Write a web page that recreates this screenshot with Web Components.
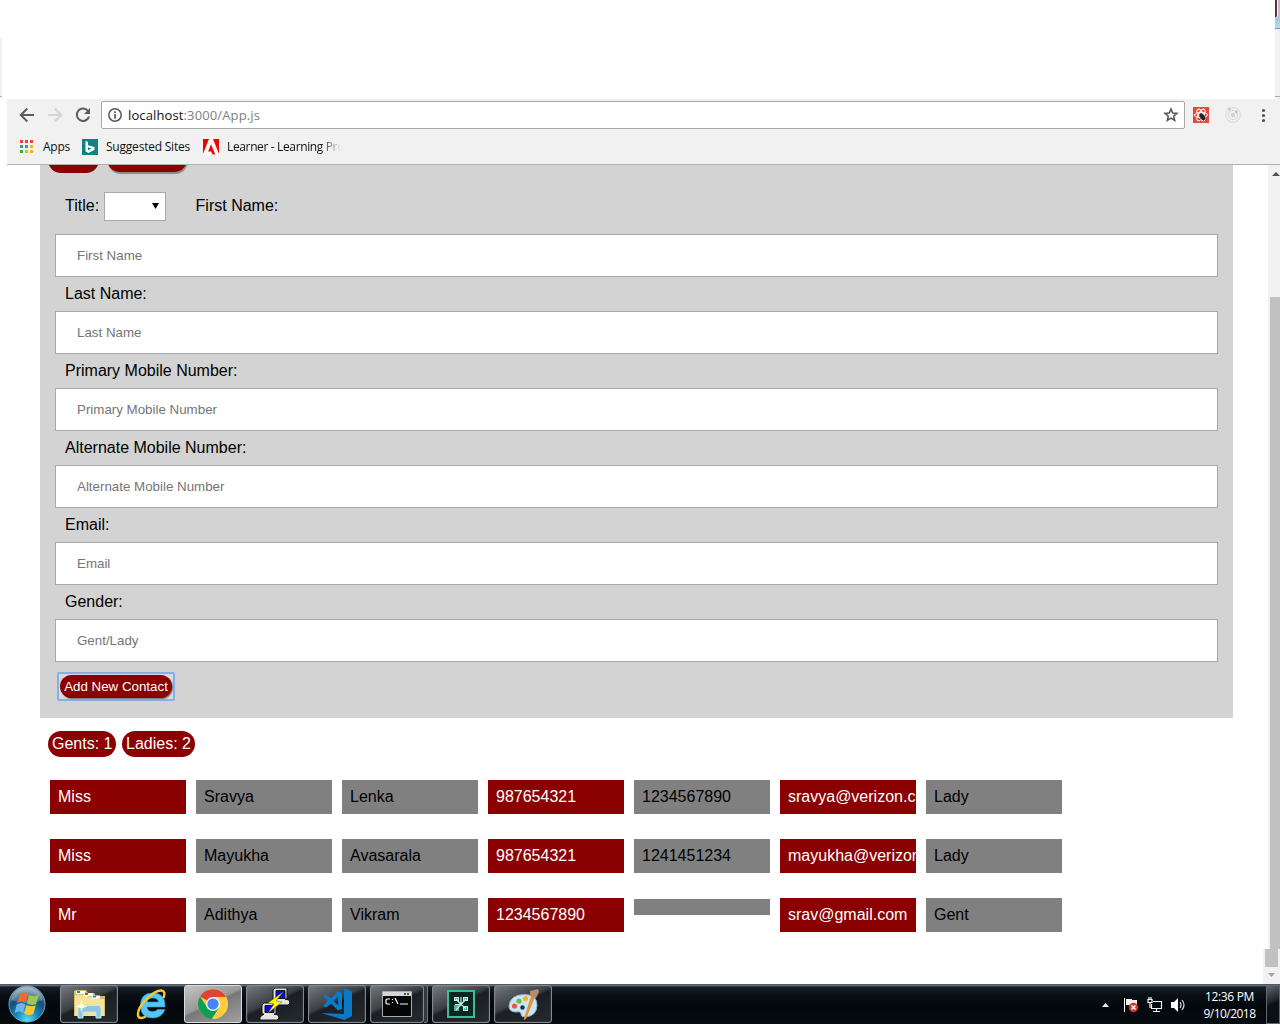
<!DOCTYPE html>
<html lang="en"><head><meta charset="utf-8"><title>Contacts</title>
<style>
html,body{margin:0;padding:0;height:100%;overflow:hidden;background:#fff;font-family:"Liberation Sans",Arial,sans-serif;font-size:16px;color:#000}
</style></head><body>
<desk-screen></desk-screen>
<script>
const define=(name,html,init)=>customElements.define(name,class extends HTMLElement{
  constructor(){super();this.attachShadow({mode:'open'}).innerHTML=html}
  connectedCallback(){if(init)init(this,this.shadowRoot)}
});

// Text whose tracking is adjusted to a given width
define('fit-text','<style>:host{display:block;white-space:nowrap;line-height:16px}span{display:inline-block}</style><span><slot></slot></span>',(el,root)=>{
  const s=root.querySelector('span'),n=el.textContent.length,w=+el.getAttribute('width');
  s.style.letterSpacing=((w-s.getBoundingClientRect().width)/n)+'px';
});

define('browser-toolbar',`<style>
:host{display:block;height:66px;margin-left:7px;background:#f1f1f1;border-bottom:1px solid #b0b0b0;box-sizing:border-box;font-family:"Open Sans","Noto Sans",sans-serif;color:#111}
svg{display:block;flex:none}
.nav{display:flex;align-items:center;height:32px;padding-left:12px}
.addr{display:flex;align-items:center;width:1084px;height:28px;box-sizing:border-box;border:1px solid #a8a8a8;border-radius:2px;background:#fff;margin-left:10px;padding:0 5px 0 6px;font-size:13px;flex:none}
.addr fit-text{margin-left:6px;flex:1}
.addr i{font-style:normal;color:#808080}
.marks{display:flex;align-items:center;height:32px;padding-left:13px;font-size:12px}
.fade{width:114px;overflow:hidden;-webkit-mask-image:linear-gradient(90deg,#000 82%,transparent);mask-image:linear-gradient(90deg,#000 82%,transparent)}
</style>
<div class="nav">
<svg width="16" height="16" viewBox="0 0 16 16" fill="none" stroke="#5a5d61" stroke-width="2"><path d="M15 8H2.500M8.300 1.500L1.800 8l6.500 6.500"/></svg>
<svg style="margin-left:12px" width="16" height="16" viewBox="0 0 16 16" fill="none" stroke="#d4d4d4" stroke-width="2"><path d="M1 8h12.500M7.700 1.500L14.200 8l-6.500 6.500"/></svg>
<svg style="margin-left:12px" width="16" height="16" viewBox="0 0 16 16"><path d="M13 4A6.200 6.200 0 1 0 14 9.500" fill="none" stroke="#5a5d61" stroke-width="2"/><path d="M15 1v6H9z" fill="#5a5d61"/></svg>
<div class="addr">
<svg width="14" height="14" viewBox="0 0 14 14"><circle cx="7" cy="7" r="6.200" fill="none" stroke="#55585c" stroke-width="1.500"/><path d="M6.200 6h1.700v4.700H6.200zM6.200 3.200h1.700v1.700H6.200z" fill="#55585c"/></svg>
<fit-text width="132">localhost<i>:3000/App.js</i></fit-text>
<svg width="16" height="16" viewBox="0 0 16 16"><path d="M8 2l1.700 4 4.300.4-3.300 2.900 1 4.200L8 11.200l-3.700 2.300 1-4.200L2 6.400 6.300 6z" fill="none" stroke="#505357" stroke-width="1.500"/></svg>
</div>
<svg style="margin-left:8px" width="16" height="16" viewBox="0 0 16 16"><path fill="#dd4b39" d="M0 0h16v16H0z"/><g fill="none" stroke="#fff" stroke-width="1"><ellipse cx="8" cy="8" rx="6.500" ry="2.600"/><ellipse cx="8" cy="8" rx="6.500" ry="2.600" transform="rotate(60 8 8)"/><ellipse cx="8" cy="8" rx="6.500" ry="2.600" transform="rotate(120 8 8)"/></g><ellipse cx="9.500" cy="10" rx="2.200" ry="3.500" fill="#222" transform="rotate(-30 9.500 10)"/><path d="M6 9l6.500 2.500M6.500 12.500l6-4M7.500 6.500l3 7" stroke="#222" stroke-width=".8"/></svg>
<svg style="margin-left:16px" width="16" height="16" viewBox="0 0 16 16" fill="none" stroke="#d8d8d8"><circle cx="8" cy="8" r="7.300"/><circle cx="8" cy="8" r="4.600"/><circle cx="8" cy="8" r="2.300" fill="#d2d2d2" stroke="none"/><g fill="#c6c6c6" stroke="none"><circle cx="4.300" cy="2" r="1.500"/><circle cx="11.300" cy="5" r="1.400"/></g></svg>
<svg style="margin-left:20px" width="5" height="16" viewBox="0 0 5 16" fill="#505357"><circle cx="2.500" cy="3.500" r="1.600"/><circle cx="2.500" cy="8.500" r="1.600"/><circle cx="2.500" cy="13.500" r="1.600"/></svg>
</div>
<div class="marks">
<svg style="margin-top:-2px" width="13" height="13" viewBox="0 0 13 13"><path fill="#ea4335" d="M0 0h3v3H0zM5 0h3v3H5zM10 0h3v3h-3z"/><path fill="#34a853" d="M0 5h3v3H0zM0 10h3v3H0z"/><path fill="#4285f4" d="M5 5h3v3H5z"/><path fill="#fbb605" d="M10 5h3v3h-3zM5 10h3v3H5zM10 10h3v3h-3z"/></svg>
<fit-text width="27" style="margin-left:10px;width:27px">Apps</fit-text>
<svg style="margin-left:12px" width="16" height="16" viewBox="0 0 16 16"><path fill="#0c8484" d="M0 0h16v16H0z"/><path fill="#fff" fill-rule="evenodd" d="M3.500 2l2.400.8v3.400l6.600 1.900v3L6.300 14l-2.800-1.700zM5.900 8.300v3l3.600-1.800z"/></svg>
<fit-text width="84" style="margin-left:8px;width:84px">Suggested Sites</fit-text>
<svg style="margin-left:13px" width="16" height="16" viewBox="0 0 16 16"><path fill="#fff" d="M0 0h16v16H0z"/><path fill="#f40000" d="M0 0h6L0 15zM10 0h6v15zM8 5.200l4.300 10.300H9.500l-1.300-3H5.100z"/></svg>
<div class="fade" style="margin-left:8px"><fit-text width="117">Learner - Learning Pro</fit-text></div>
</div>`);

define('form-field',`<style>
:host{display:block}label{display:block;height:34px;line-height:33px;padding-left:10px}
:host([bare]) label{display:none}
input{display:block;width:100%;height:43px;box-sizing:border-box;border:1px solid #a9a9a9;border-radius:0;padding:0 21px;font:13.333px "Liberation Sans",Arial,sans-serif;background:#fff;outline:none}
input::placeholder{color:#757575;opacity:1}
</style><label></label><input>`,(el,root)=>{
  const t=el.getAttribute('label');
  root.querySelector('label').textContent=t+':';
  root.querySelector('input').placeholder=el.getAttribute('hint')||t;
});

define('contact-form',`<style>
:host{display:block;height:553px;width:1193px;margin-left:40px;box-sizing:border-box;padding:0 15px;background:#d3d3d3;overflow:hidden}
.tabs{display:flex;gap:8px;height:27px;margin-left:-7px;overflow:hidden}
.tabs b{display:block;background:#8b0000;border-radius:13px;height:26px;margin-top:-18px;width:51px}
.tabs b+b{width:80px;margin-top:-19px;box-shadow:1px 2px 1px #888}
.title{display:flex;height:42px;padding-left:10px}
.title span{line-height:27px}
.select{display:flex;align-items:center;justify-content:flex-end;box-sizing:border-box;width:62px;height:29px;margin-left:5px;margin-right:29.500px;border:1px solid #a9a9a9;background:#fff;padding-right:6px}
.select svg{margin-top:-2px}
button{display:block;width:112px;height:23px;padding:0;border:0;border-radius:12px;background:#8b0000;color:#fff;font:13.333px/23px "Liberation Sans",Arial,sans-serif;white-space:nowrap;box-shadow:1px 1px 1px #777;margin:0}
.focus{width:118px;height:29px;box-sizing:border-box;border:2px solid #88aee8;border-radius:2px;margin:10px 0 0 2px;padding:1px;display:flex;background:#d9d9d9}
</style>
<div class="tabs"><b></b><b></b></div>
<div class="title"><span>Title:</span><div class="select"><svg width="7" height="6"><path d="M0 0h7L3.500 6z"/></svg></div><span>First Name:</span></div>
<form-field bare label="First Name"></form-field>
<form-field label="Last Name"></form-field>
<form-field label="Primary Mobile Number"></form-field>
<form-field label="Alternate Mobile Number"></form-field>
<form-field label="Email"></form-field>
<form-field label="Gender" hint="Gent/Lady"></form-field>
<div class="focus"><button>Add New Contact</button></div>`);

define('count-pill',`<style>:host{display:block;height:26px;line-height:26px;border-radius:13px;background:#8b0000;color:#fff;box-sizing:border-box;padding:0 4px;white-space:nowrap}</style><slot></slot>`);

define('contact-row',`<style>:host{display:flex;gap:10px;height:34px;margin-bottom:25px;padding-left:50px}
div{box-sizing:border-box;width:136px;height:34px;line-height:34px;padding-left:8px;background:#808080;overflow:hidden;white-space:nowrap;flex:none}
.r{background:#8b0000;color:#fff}div:empty{height:16px;margin-top:1px}</style>`,(el,root)=>{
  el.getAttribute('values').split('|').forEach((v,i)=>{
    const d=document.createElement('div');d.textContent=v;if([0,3,5].includes(i))d.className='r';root.append(d);
  });
});

define('page-scrollbar',`<style>:host{display:flex;flex-direction:column;align-items:flex-end;width:17px;height:819px}
.top{width:12px;height:784px;background:#f1f1f1;display:flex;flex-direction:column;align-items:flex-end;overflow:hidden}
.top svg{height:132px;flex:none}.thumb{width:10px;height:652px;background:#c1c1c1}
.end{width:17px;height:35px;background:#f1f1f1}svg{display:block}</style>
<div class="top"><svg width="8" height="132"><path fill="#505050" d="M0 11L4 7l4 4z"/></svg><div class="thumb"></div></div>
<div class="end"><svg width="17" height="35"><path fill="#c1c1c1" d="M2 0h13v18H2z"/><path fill="#a3a3a3" d="M5 24h7l-3.500 4z"/></svg></div>`);

define('task-button',`<style>:host{display:flex;align-items:center;justify-content:center;width:58px;height:38px;box-sizing:border-box;border:1px solid #82878b;border-radius:3px;background:linear-gradient(155deg,#74777a 0,#3d4145 42%,#1b1f23 49%,#252a2e 100%);box-shadow:inset 0 0 1px #aaa;flex:none}
:host([active]){background:linear-gradient(155deg,#c3c4c5,#999 45%,#777 50%,#a2a2a2);border-color:#ddd}
:host([plain]){background:none;border-color:transparent;box-shadow:none}</style><slot></slot>`);

define('task-bar',`<style>
:host{display:flex;align-items:flex-start;height:40px;box-sizing:border-box;background:linear-gradient(#27323b 0,#77838e 1px,#17202a 3px,#0a1016 10px,#03080d 22px,#060b10);padding-top:1px;color:#fff;font-family:"Open Sans","Noto Sans",sans-serif;font-size:12px}
svg{display:block;flex:none}.apps{display:flex;gap:4px;margin-left:12px}
.tray{display:flex;align-items:center;height:39px;margin-left:auto}
.clock{display:flex;flex-direction:column;gap:1px;width:53px;align-items:center;margin:1px 10px 0 18px}
.peek{width:14px;height:39px;box-sizing:border-box;border:1px solid #60666b;background:linear-gradient(155deg,#60666b,#20262b 40%,#0b1015 50%)}
.stack{width:4px;height:38px;box-sizing:border-box;border:1px solid #70757a;border-left:0;border-radius:0 3px 3px 0;margin-left:-4px;background:#33383c}
</style>
<svg style="margin-left:8px" width="38" height="38" viewBox="0 0 38 38"><defs><radialGradient id="o" cx=".5" cy=".95" r=".9"><stop offset="0" stop-color="#4de6ff"/><stop offset=".35" stop-color="#1787bd"/><stop offset=".7" stop-color="#174d79"/><stop offset="1" stop-color="#8fa9ba"/></radialGradient></defs><circle cx="19" cy="19" r="18" fill="url(#o)" stroke="#789fb7"/><path d="M3 15A16.500 16.500 0 0 1 35 15Q19 21 3 15" fill="#fff" opacity=".22"/><path d="M12 9q4-3 8 0l-2.300 9q-4-3-8.500 0z" fill="#ef6a2d"/><path d="M21 10q5 2.500 10-.5l-2.800 9.500q-5 2-9.500-.5z" fill="#9cc94a"/><path d="M8.800 19.500q5-3 8.600 0l-2.300 8.500q-4-3-8.600 0z" fill="#67b7ec"/><path d="M18.400 20q5 2.500 9.400.3l-2.500 8.700q-5 2.500-9.300-.4z" fill="#fcc630"/></svg>
<div class="apps">
<task-button style="margin-left:2px"><svg width="34" height="32" viewBox="0 0 34 32"><path d="M2 4q0-2 2-2h10l2 3h6l2 3h9v20H2z" fill="#d9bd68"/><path d="M3 7h12l2 2h7l2 2h6v17H3z" fill="#f4e39b"/><path d="M4 3h9v3H4zM12 5h9v3h-9zM20 7.500h8v3h-8z" fill="#fff"/><path fill="#12a83d" d="M5 3h3v2H5z"/><path fill="#d54125" d="M13 5h3v2h-3z"/><path fill="#2188d9" d="M21 7.500h3v2h-3z"/><path d="M6 30V20q0-2.500 3-2.500h17q3 0 3 2.500v10h-5v-6H11v6z" fill="#8fc5df" stroke="#c4e6f5"/><path d="M9.500 11l1 6 5 1.500-5 1.500-1 5-1-5-5-1.500 5-1.500z" fill="#fff"/></svg></task-button>
<task-button plain><svg width="34" height="34" viewBox="0 0 34 34"><path d="M31 20H13q.5 4.500 5.500 4.500 3.500 0 5-2H31Q28 31 18.500 31 6.500 31 6.500 18.500 6.500 6 18.500 6 31 6 31 18.500zM13.200 15h11.300q-.8-4-5.700-4t-5.600 4z" fill="#55c5f5" fill-rule="evenodd" stroke="#249ad3" stroke-width=".6"/><path d="M29.500 11q2.500-7-2-7.500C20 3 3 19 4 28c.5 4.500 5 3 8 1.500" fill="none" stroke="#f8c72c" stroke-width="2.400"/></svg></task-button>
<task-button active><svg width="30" height="30" viewBox="0 0 30 30"><circle cx="15" cy="15" r="15" fill="#ffcd40"/><path d="M15 15L2 7.500A15 15 0 0 1 28 8H15z" fill="#db4437"/><path d="M2 7.500A15 15 0 0 0 14 30l7-11-6-4-6 3z" fill="#0f9d58"/><path d="M28 8H15v7l6 4-7 11A15 15 0 0 0 28 8z" fill="#ffcd40"/><circle cx="15" cy="15" r="7" fill="#f1f1f1"/><circle cx="15" cy="15" r="5.600" fill="#4285f4"/></svg></task-button>
<task-button><svg width="32" height="32" viewBox="0 0 32 32"><g stroke="#111" stroke-width="1"><path fill="#e5e5e5" d="M14 2l2-2h12v11h-2l4 1 1 3-2 2H14v-4h2l-2-2zM3 17l2-2h12v11h-2l4 1 1 3-2 2H1v-3l4-3H3z"/><path fill="#0808e8" d="M17 2.500h9v8h-9zM6 17.500h9v7H6z"/><path fill="#ffff00" d="M24 4L9 15l6 1-6 9 14-11-6-1z" stroke="#555" stroke-width=".5"/></g></svg></task-button>
<task-button><svg width="34" height="34" viewBox="0 0 34 34" fill="#087ac8"><path d="M24 1l8 3.500V29l-7.500 4L1 26l23 1z"/><path fill-rule="evenodd" d="M3 9l3-1.500 5 4L18 4l4 2v16l-4 1.500-7-7-5 4L3 19l4.500-5zM18 9.500L13.500 14l4.500 4z"/></svg></task-button>
<task-button style="width:54px"><svg width="30" height="26" viewBox="0 0 30 26"><path fill="#050505" stroke="#aaa" d="M.5.500h29v25H.5z"/><path fill="#d5d5d5" d="M1 1h28v4H1z"/><path fill="#555" d="M22 2h2v2h-2zM25 2h2v2h-2z"/><path d="M8 8H5L4 9v3l1 1h3M10.500 8v1M10.500 11v1M13 7l3 6M18 13h8" fill="none" stroke="#fff" stroke-width="1.200"/></svg></task-button>
<div class="stack"></div>
<task-button><svg width="28" height="28" viewBox="0 0 28 28"><path d="M1 1h26v26H1z" fill="#0c2521" stroke="#3ebd93" stroke-width="2"/><path fill="#47b78e" d="M7 15h5v6H7z"/><path fill="#c5f0df" d="M7 7h5v4H7zM16 7h5v4h-5zM16 16h5v5h-5z"/><path fill="#47b78e" d="M8 8h3v2H8zM17 8h3v2h-3zM17 17h3v3h-3z"/><path d="M14 7v7M9 9l5 5.500L19 9M8 14.500h6l5 4M14 14.500L9 20" fill="none" stroke="#c5f0df" stroke-width="1.200"/></svg></task-button>
<task-button><svg width="34" height="34" viewBox="0 0 34 34"><path d="M3 19Q4 8 18 7.500q13 0 13 10.500 0 11-12 12-4 0-4-3 0-3-5-2-7 0-7-6z" fill="#cbe5f3" stroke="#86b7d1"/><circle cx="8.500" cy="19" r="2.600" fill="#e75548"/><circle cx="13" cy="14" r="2.600" fill="#6abb45"/><circle cx="19.500" cy="11.500" r="2.600" fill="#f2b134"/><circle cx="16.500" cy="20.500" r="2.200" fill="#173542"/><path d="M25 9l4 1-9 22-2.500 1z" fill="#e69138"/><path d="M24 4l8-2 1 3-3 6-5-1-1-3z" fill="#b98b6c"/></svg></task-button>
</div>
<div class="tray">
<svg width="7" height="4"><path fill="#eee" d="M0 4l3.500-4L7 4z"/></svg>
<svg style="margin-left:14px" width="16" height="16" viewBox="0 0 16 16"><path d="M1.500 1v14" stroke="#fff"/><path d="M3 2h6v1h5v6H8V8H3z" fill="#eee"/><circle cx="10.500" cy="10.500" r="4.700" fill="#df3028"/><path d="M8.500 8.500l4 4M12.500 8.500l-4 4" stroke="#fff" stroke-width="1.500"/></svg>
<svg style="margin-left:8px" width="16" height="16" viewBox="0 0 16 16" fill="none" stroke="#f3f3f3" stroke-width="1.200"><path d="M6 4.500h8.500v7h-10V7M9.500 12v2.500M6 14.500h7M1 2.500h4v3H1zM2 0v2M4 0v2M3 6v5"/></svg>
<svg style="margin-left:8px" width="14" height="16" viewBox="0 0 14 16"><path d="M0 5h3l4-4v14l-4-4H0z" fill="#fff"/><path d="M9 5q2 3 0 6M11 3q4 5 0 10" fill="none" stroke="#ddd" stroke-width="1.200"/></svg>
<div class="clock"><fit-text width="49">12:36 PM</fit-text><fit-text width="52">9/10/2018</fit-text></div>
<div class="peek"></div></div>`);

define('desk-screen',`<style>
:host{display:flex;flex-direction:column;width:1280px;height:1024px;overflow:hidden}
.blank{height:99px;display:flex;justify-content:space-between;flex:none}
.l{width:2px;height:58px;margin-top:38px;background:#f1f1f1;border-bottom:1px solid #aaa}
.r{width:5px;height:99px;background:linear-gradient(#a7c0da 0,#aac9e6 20px,#bbd8ee 28px,#8297b6 28px,#8297b6 29px,#f1f1f1 29px,#f1f1f1 96px,#aaa 96px,#aaa 97px,#f1f1f1 97px);display:flex}
.r i{width:3px;height:17px;background:#6b2b2b;border-right:1px solid #fff;box-sizing:border-box;border-radius:0 0 2px 0}
.view{display:flex;height:819px;flex:none}.page{width:1263px;height:819px;overflow:hidden}
.counts{display:flex;gap:6px;margin:13px 0 23px 48px}
</style>
<div class="blank"><div class="l"></div><div class="r"><i></i></div></div>
<browser-toolbar></browser-toolbar>
<div class="view"><div class="page">
<contact-form></contact-form>
<div class="counts"><count-pill style="width:68px">Gents: 1</count-pill><count-pill style="width:73px">Ladies: 2</count-pill></div>
<contact-row values="Miss|Sravya|Lenka|987654321|1234567890|sravya@verizon.com|Lady"></contact-row>
<contact-row values="Miss|Mayukha|Avasarala|987654321|1241451234|mayukha@verizon.com|Lady"></contact-row>
<contact-row values="Mr|Adithya|Vikram|1234567890||srav@gmail.com|Gent"></contact-row>
</div><page-scrollbar></page-scrollbar></div>
<task-bar></task-bar>`);
</script></body></html>
